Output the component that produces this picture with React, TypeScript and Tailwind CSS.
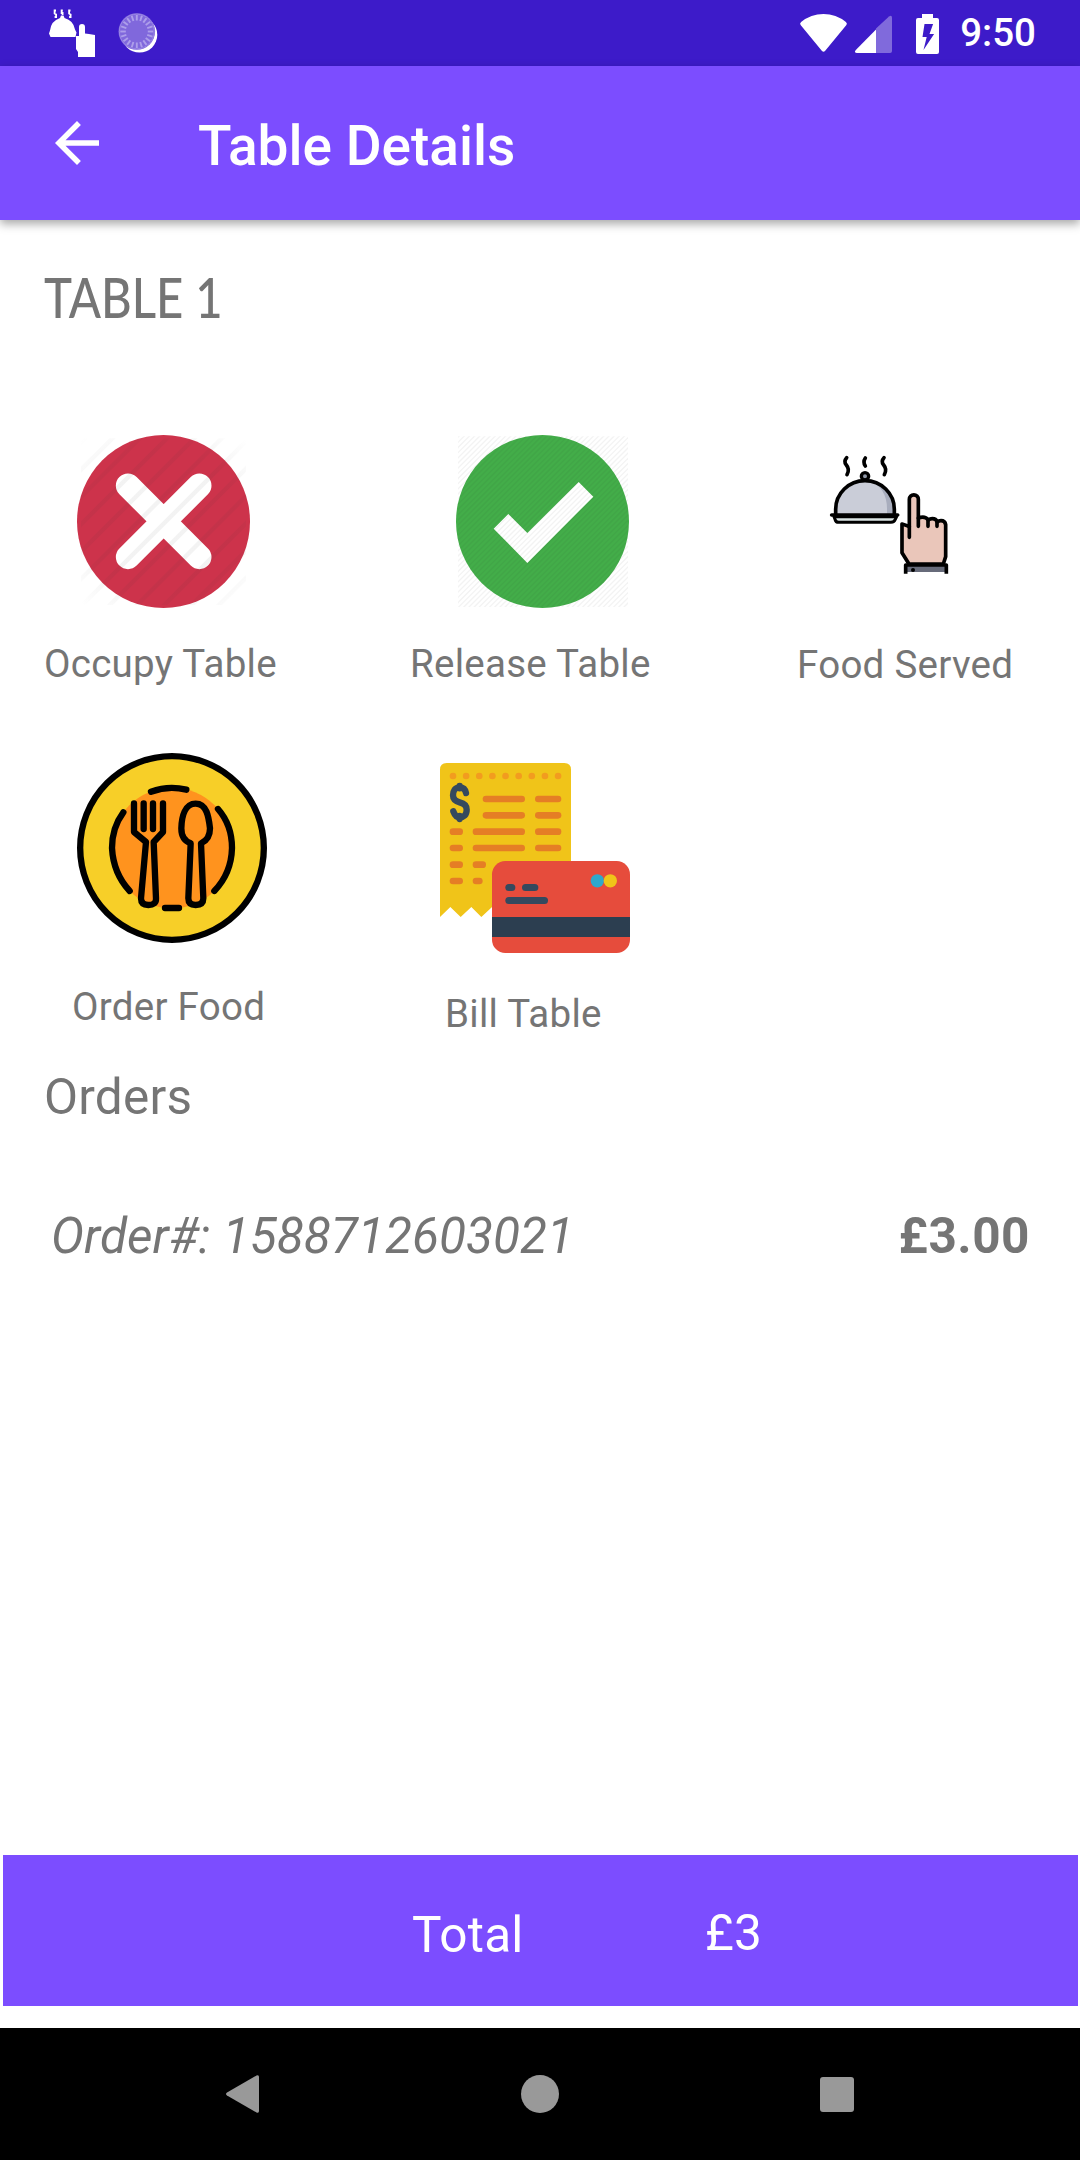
import React from "react";

function DishStatusIcon() {
  return (
    <svg className="ml-[48px] h-[50px] w-[50px] shrink-0" viewBox="48 8 50 50" fill="none">
      <g stroke="#fff" strokeWidth="1.8">
        <path d="M56 10.500h-1.400v3l1.500 1v2.500h-1.500M62.800 10.500h-1.200v2.500h1v2M70.500 10.500h-1.400v3l1.500 1v2.500h-1.500" />
      </g>
      <path
        fill="#fff"
        d="M49 33.500l1-3q1-9.500 10-12.500l1-2.500h2.500l1 2.500q9 2.500 10.500 11.500l1.500 3-1 4.500H50.500zM79 27q0-3 3-3t3 3v6.500l4 .5 6 1V57H78v-5l-2-3V36h3z"
      />
    </svg>
  );
}

function SpinnerStatusIcon() {
  const ticks = Array.from({ length: 20 }, (_, i) => i * 18);
  return (
    <svg className="ml-[19px] h-[44px] w-[44px] shrink-0" viewBox="117 11 44 44">
      <circle cx="139.500" cy="34.800" r="17.800" fill="#fff" />
      <circle cx="136.800" cy="31.500" r="18.300" fill="#8068dc" />
      <circle cx="136.800" cy="31.500" r="17.400" fill="none" stroke="#9a87e5" strokeWidth="1" />
      {ticks.map((a) => (
        <path
          key={a}
          d="M136.800 15v5.500"
          stroke="#ad9eea"
          strokeWidth="1.900"
          transform={`rotate(${a} 136.800 31.500)`}
        />
      ))}
    </svg>
  );
}

function StatusBar() {
  return (
    <div className="flex h-[66px] w-full items-center bg-[#3d1bc9]">
      <DishStatusIcon />
      <SpinnerStatusIcon />
      <svg className="ml-auto h-[48px] w-[144px]" viewBox="798 8 144 48">
        <path
          fill="#fff"
          d="M800.600 24q-1.200-1.700.5-3 9.800-8 22.400-8t22.400 8q1.700 1.300.5 3L825 50q-1.500 1.600-3 0z"
        />
        <path fill="#fff" fillOpacity=".35" d="M876 27.500L889 15.500q3-1.800 3 1.500v33q0 2-2 2h-14z" />
        <path fill="#fff" d="M876 28.500V52H857q-3.500-.5-1.200-3z" />
        <path
          fill="#fff"
          fillRule="evenodd"
          d="M922 13h11v4h4q2 0 2 2v32q0 2-2 2h-19q-2 0-2-2V19q0-2 2-2h4zM924.500 23l-2 13h4.200l-3.200 13 10.600-16h-4.600l3.600-10z"
        />
      </svg>
      <span className="mr-[44px] ml-[18px] text-[38.500px] leading-[68px] font-medium text-white">9:50</span>
    </div>
  );
}

function AppBar() {
  return (
    <header className="relative z-10 flex h-[154px] w-full items-start bg-[#7c4dff] shadow-[0_4px_9px_rgba(0,0,0,0.34)]">
      <svg className="mt-[44px] ml-[44px] h-[66px] w-[66px]" viewBox="0 0 24 24" fill="#fff">
        <path d="M20 11H7.830l5.590-5.590L12 4l-8 8 8 8 1.410-1.410L7.830 13H20v-2z" />
      </svg>
      <h1 className="mt-[48px] ml-[88px] text-[55px] leading-[64px] font-medium text-white">Table Details</h1>
    </header>
  );
}

function OccupyIcon() {
  const stripes = Array.from({ length: 18 }, (_, i) => 280 + i * 82);
  return (
    <svg className="ml-[33px] h-[173px] w-[173px]" viewBox="141 105 519 519">
      <defs>
        <clipPath id="occupyBox">
          <rect x="153" y="115" width="495" height="500" />
        </clipPath>
        <radialGradient id="occupyFade" gradientUnits="userSpaceOnUse" cx="400" cy="365" r="350">
          <stop offset="0.6" stopColor="#333" stopOpacity=".06" />
          <stop offset="1" stopColor="#333" stopOpacity="0" />
        </radialGradient>
      </defs>
      <circle cx="400.500" cy="364.500" r="259.500" fill="#cd334b" />
      <path d="M294 257L508 471M508 257L294 471" stroke="#fff" strokeWidth="73" strokeLinecap="round" />
      <g clipPath="url(#occupyBox)" stroke="url(#occupyFade)" strokeWidth="13">
        {stripes.map((s) => (
          <path key={s} d={`M${s - 700} 700L${s} 0`} />
        ))}
      </g>
    </svg>
  );
}

function ReleaseIcon() {
  const stripes = Array.from({ length: 70 }, (_, i) => 270 + i * 15.5);
  return (
    <svg className="ml-[47px] h-[173px] w-[173px]" viewBox="168 105 519 519">
      <defs>
        <clipPath id="releaseBox">
          <rect x="174" y="109" width="510" height="512" />
        </clipPath>
      </defs>
      <circle cx="427.500" cy="364.500" r="259.500" fill="#43ad49" />
      <path d="M281 386L325 342L382 399L536 246L580 290L382 489Z" fill="#fff" />
      <g clipPath="url(#releaseBox)" stroke="#333" strokeOpacity=".06" strokeWidth="4">
        {stripes.map((s) => (
          <path key={s} d={`M${s - 700} 700L${s} 0`} />
        ))}
      </g>
    </svg>
  );
}

function ServedIcon() {
  return (
    <svg
      className="mt-[15px] mb-[28px] ml-[28px] h-[130px] w-[130px]"
      viewBox="135 60 390 390"
      fill="none"
      stroke="#000"
      strokeWidth="11"
      strokeLinecap="round"
      strokeLinejoin="round"
    >
      <path d="M200 83q-10 11-1 22 11 13 2 29M256 84q-8 12 0 24M312 83q-10 11-1 22 11 13 2 29" />
      <circle cx="255" cy="139" r="11" fill="#8f97a6" strokeWidth="10" />
      <path d="M167 254V238A88 86 0 0 1 343 238V254Z" fill="#cacdd8" stroke="none" />
      <path d="M272 153Q320 175 321 235V254H343V238Q338 160 272 153Z" fill="#a8adbd" stroke="none" />
      <path d="M167 254V238A88 86 0 0 1 343 238V254" />
      <path d="M162 260H350L346 268Q343 277 333 277H176Q167 277 165 268Z" fill="#dbe5e4" strokeWidth="9" />
      <path d="M155 255H353" />
      <path
        d="M366 282V368L387 402H490L497 380V284Q495 272 483 272Q476 272 472 276Q468 266 457 266Q450 266 445 270Q435 256 415 264V208A13.500 13.500 0 0 0 388 208V290Q380 286 366 282Z"
        fill="#eac6ba"
      />
      <path d="M388 290V322M415 264V289M444 270V289M471 275V289" />
      <path d="M377 405H499V426H377Z" fill="#676b7a" stroke="none" />
      <path d="M377 431V405H499V431" strokeLinecap="butt" />
      <circle cx="399" cy="420" r="6" fill="#000" stroke="none" />
    </svg>
  );
}

function OrderFoodIcon() {
  return (
    <svg
      className="ml-[33px] h-[190px] w-[190px]"
      viewBox="81 69 570 570"
      fill="none"
      stroke="#000"
      strokeWidth="19"
      strokeLinecap="round"
      strokeLinejoin="round"
    >
      <circle cx="366" cy="354" r="275.500" fill="#f7cf28" />
      <circle cx="366" cy="354" r="181" fill="#ff931e" stroke="none" />
      <path d="M303 185Q355 166 409 179M504 237Q546 285 546 354Q544 430 493 483M220 247Q186 293 186 354Q190 430 239 483M345 534H387" />
      <path d="M252 220V306L288 336L273 505Q273 525 295 525Q319 525 318 505L311 336L339 306V220M281 220V297M309 220V297" />
      <path d="M437 221C405 221 395 260 394 295C394 325 408 335 422 340L415 505Q415 525 437 525Q460 525 460 505L453 340C470 333 480 320 480 295C476 260 470 221 437 221Z" />
    </svg>
  );
}

const receiptLines: [number, number, number][] = [
  [218, 177, 127],
  [375, 177, 79],
  [218, 226, 127],
  [375, 226, 79],
  [119, 275, 40],
  [188, 275, 157],
  [375, 275, 79],
  [119, 324, 40],
  [188, 324, 157],
  [375, 324, 79],
  [119, 374, 40],
  [188, 374, 40],
  [119, 423, 40],
  [188, 423, 30],
];

function BillIcon() {
  return (
    <svg className="ml-[31px] h-[190px] w-[190px]" viewBox="90 69 570 570">
      <path
        d="M90 89Q90 69 110 69H463Q483 69 483 89V500H247L214 531L184 501L152 531L121 501L90 531Z"
        fill="#f0c419"
      />
      {Array.from({ length: 9 }, (_, i) => (
        <circle key={i} cx={129 + i * 39.4} cy="108" r="10" fill="#f29c1f" />
      ))}
      {receiptLines.map(([x, y, w]) => (
        <rect key={`${x}-${y}`} x={x} y={y - 10} width={w} height="20" rx="10" fill="#e57e25" />
      ))}
      <path
        d="M149 138V145M149 228V237M168 159C166 146 157 142 148 142C136 142 129 153 129 166C129 179 137 184 149 187C162 190 170 195 170 209C170 225 161 232 149 232C138 232 134 225 130 214"
        fill="none"
        stroke="#35495e"
        strokeWidth="19"
        strokeLinecap="round"
      />
      <rect x="246" y="363" width="414" height="276" rx="40" fill="#e64c3c" />
      <rect x="246" y="531" width="414" height="60" fill="#2c3e50" />
      <g fill="#35495e">
        <rect x="286" y="432" width="30" height="21" rx="10.500" />
        <rect x="336" y="432" width="49" height="21" rx="10.500" />
        <rect x="286" y="471" width="128" height="21" rx="10.500" />
      </g>
      <circle cx="562" cy="422.500" r="20" fill="#2fa8cc" />
      <circle cx="601" cy="422.500" r="20" fill="#f0c419" />
    </svg>
  );
}

function NavBar() {
  return (
    <nav className="flex h-[132px] w-full items-center bg-black">
      <svg className="ml-[222px] h-[42px] w-[42px]" viewBox="222 2073 42 42" fill="#999">
        <path d="M227 2092.500L256.500 2075.500Q259 2074.500 259 2077V2111Q259 2113.500 256.500 2112.500L227 2095.500Q225 2094 227 2092.500Z" />
      </svg>
      <div className="ml-[257px] h-[38px] w-[38px] rounded-full bg-[#999]" />
      <div className="ml-[261px] h-[35px] w-[34px] rounded-[3px] bg-[#999]" />
    </nav>
  );
}

const label = "whitespace-nowrap text-[38.500px] leading-[46px] tracking-[0.27px]";

export default function App() {
  return (
    <div className="flex h-[2160px] w-[1080px] flex-col overflow-hidden bg-white font-['Roboto',sans-serif] text-[#757575]">
      <StatusBar />
      <AppBar />
      <main className="flex flex-1 flex-col">
        <h2 className="mt-[44px] ml-[44px] h-[66px] w-fit origin-left scale-x-[0.860] font-['Lato',sans-serif] text-[55px] leading-[66px] font-medium whitespace-nowrap">
          TABLE 1
        </h2>
        <section className="mt-[105px] flex pl-[44px]">
          <div className="flex w-[365px] flex-col">
            <OccupyIcon />
            <span className={`${label} mt-[33px]`}>Occupy Table</span>
          </div>
          <div className="flex w-[388px] flex-col">
            <ReleaseIcon />
            <span className={`${label} mt-[33px] ml-px`}>Release Table</span>
          </div>
          <div className="flex flex-col">
            <ServedIcon />
            <span className={`${label} mt-[34px]`}>Food Served</span>
          </div>
        </section>
        <section className="mt-[65px] flex pl-[44px]">
          <div className="flex w-[365px] flex-col">
            <OrderFoodIcon />
            <span className={`${label} mt-[41px] ml-[28px]`}>Order Food</span>
          </div>
          <div className="mt-[10px] flex flex-col">
            <BillIcon />
            <span className={`${label} mt-[38px] ml-[36px]`}>Bill Table</span>
          </div>
        </section>
        <h3 className="mt-[31px] ml-[44px] text-[49.500px] leading-[58px] tracking-[0.25px]">Orders</h3>
        <div className="mt-[81px] flex justify-between pr-[50px] pl-[51px] text-[49.500px] leading-[58px]">
          <span className="tracking-[0.06px] italic">Order#: 1588712603021</span>
          <span className="font-bold tracking-[0.5px]">£3.00</span>
        </div>
        <footer className="mt-auto mr-[2px] mb-[22px] ml-[3px] flex h-[151px] items-start bg-[#7c4dff] text-[49.500px] leading-[58px] tracking-[0.2px] text-white">
          <span className="mt-[51px] ml-[409px] w-[293px]">Total</span>
          <span className="mt-[49px]">£3</span>
        </footer>
      </main>
      <NavBar />
    </div>
  );
}
